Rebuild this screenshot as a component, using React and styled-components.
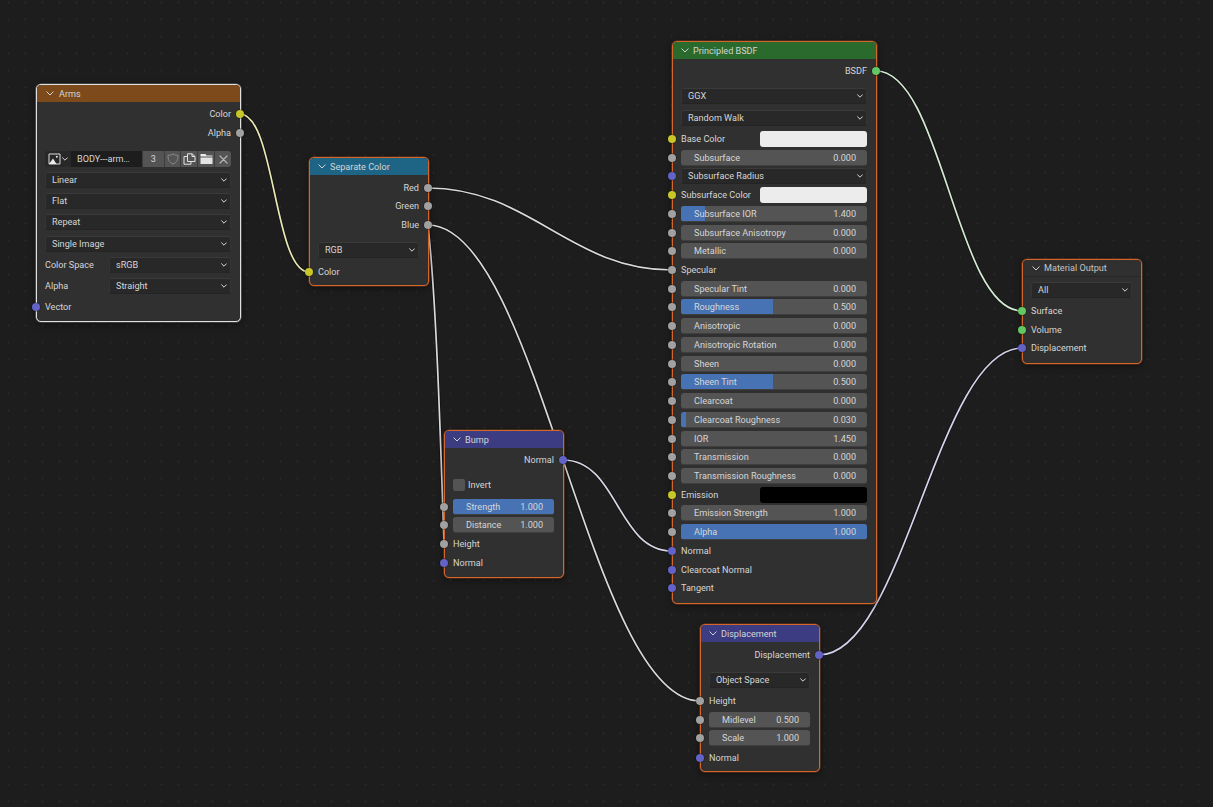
import React from 'react';
import styled, { createGlobalStyle } from 'styled-components';

const Global = createGlobalStyle`
  html, body { margin: 0; padding: 0; background: #1d1d1d; }
  * { box-sizing: border-box; }
`;

const Canvas = styled.div`
  position: relative;
  width: 1213px;
  height: 807px;
  overflow: hidden;
  background-color: #1d1d1d;
  background-image: radial-gradient(circle at 8.5px 2.5px, #282828 0.9px, transparent 1.2px);
  background-size: 17px 17px;
  font-family: Roboto, "Noto Sans", sans-serif;
  font-size: 9.1px;
  color: #d6d6d6;
`;

const Wires = styled.svg`
  position: absolute;
  inset: 0;
  width: 1213px;
  height: 807px;
`;

const NodeBox = styled.section`
  position: absolute;
  left: ${p => p.$x}px;
  top: ${p => p.$y - 1}px;
  width: ${p => p.$w}px;
  height: ${p => p.$h + 1}px;
  background: #303030;
  border: 1px solid ${p => (p.$active ? '#e0e0e0' : '#d4662a')};
  border-radius: 5px;
  box-shadow: 0 0 0 0.6px ${p => (p.$active ? 'rgba(224,224,224,0.4)' : 'rgba(212,102,42,0.45)')}, 0 2px 7px rgba(0, 0, 0, 0.45);
`;

const Header = styled.header`
  height: 17px;
  display: flex;
  align-items: center;
  gap: ${p => p.$gap}px;
  padding-left: ${p => p.$pad}px;
  background: ${p => p.$color};
  border-radius: 4px 4px 0 0;
  color: ${p => (p.$dim ? '#c4c4c4' : '#d4d4d4')};
  border-bottom: ${p => (p.$dim ? '1px solid #262626' : 'none')};
`;

const Row = styled.div`
  position: relative;
  display: flex;
  align-items: center;
  height: 16px;
  margin-top: ${p => p.$mt}px;
  padding: 0 9px 0 8px;
  line-height: 16px;
  white-space: nowrap;
`;

const Socket = styled.span`
  position: absolute;
  top: 4px;
  width: 8px;
  height: 8px;
  border-radius: 50%;
  background: ${p => p.$color};
  box-shadow: 0 0 0 0.5px rgba(0, 0, 0, 0.55);
  ${p => (p.$right ? 'right: -4px;' : 'left: -5px;')}
`;

const OutLabel = styled.span`
  margin-left: auto;
`;

const Label = styled.span`
  flex: 1;
`;

const Field = styled.div`
  flex: ${p => (p.$w ? `0 0 ${p.$w}px` : '1')};
  display: flex;
  align-items: center;
  justify-content: space-between;
  height: 16px;
  border-radius: 3px;
`;

const SelectField = styled(Field)`
  padding: 0 3px 0 6px;
  background: #282828;
  border: 1px solid #353535;
  border-top-color: #3a3a3a;
  border-bottom-color: #242424;
`;

const SliderField = styled(Field)`
  position: relative;
  overflow: hidden;
  padding: 0 11px 0 13px;
  background: #545454;
  border-bottom: 1px solid #3f3f3f;
`;

const Fill = styled.i`
  position: absolute;
  left: 0;
  top: 0;
  bottom: 0;
  background: #4772b3;
`;

const SliderText = styled.span`
  position: relative;
`;

const Swatch = styled.div`
  flex: 0 0 ${p => p.$w}px;
  height: 16px;
  border-radius: 3px;
  background: ${p => p.$color};
`;

const CheckBox = styled.span`
  width: 12px;
  height: 12px;
  margin-right: 3px;
  border-radius: 2px;
  background: #545454;
`;

const ImageBar = styled.div`
  flex: 1;
  display: flex;
  height: 16px;
  gap: 0;
  border-radius: 3px;
  overflow: hidden;
`;

const TypePick = styled.div`
  flex: 0 0 26px;
  display: flex;
  align-items: center;
  justify-content: center;
  gap: 1px;
  background: #282828;
`;

const NameField = styled.div`
  flex: 0 0 71px;
  padding-left: 6px;
  background: #1d1d1d;
  color: #d6d6d6;
`;

const IconBtn = styled.div`
  flex: ${p => p.$grow || 1};
  display: flex;
  align-items: center;
  justify-content: center;
  background: #545454;
  border-left: 1px solid #3c3c3c;
`;

const Chevron = ({ size = 8, color = '#d0d0d0' }) => (
  <svg width={size} height={size * 0.625} viewBox="0 0 8 5" fill="none" stroke={color} strokeWidth="1" strokeLinecap="round" strokeLinejoin="round">
    <path d="M0.8 0.8 L4 4 L7.2 0.8" />
  </svg>
);

const Caret = () => (
  <svg width="6" height="4" viewBox="0 0 6 4" fill="none" stroke="#d8d8d8" strokeWidth="1" strokeLinecap="round" strokeLinejoin="round">
    <path d="M0.6 0.8 L3 3.2 L5.4 0.8" />
  </svg>
);

const ImageIcon = () => (
  <svg width="13" height="12" viewBox="0 0 13 12">
    <path d="M1 1h11v10H1z" fill="none" stroke="#dcdcdc" strokeWidth="1" />
    <path d="M1 11 L5 5.5 L8.5 11z" fill="#ececec" />
    <circle cx="8.8" cy="3.8" r="1" fill="#ececec" />
  </svg>
);

const ShieldIcon = () => (
  <svg width="12" height="12" viewBox="0 0 12 12" fill="none" stroke="#8c8c8c" strokeWidth="1">
    <path d="M6 1 C7.5 2 9 2.3 11 2.3 C11 6.5 10 9.5 6 11 C2 9.5 1 6.5 1 2.3 C3 2.3 4.5 2 6 1z" />
  </svg>
);

const CopyIcon = () => (
  <svg width="13" height="12" viewBox="0 0 13 12" fill="none" stroke="#e2e2e2" strokeWidth="1">
    <path d="M4.5 8.5 V0.8 H9 L12 3.5 V8.5z" />
    <path d="M9 0.8 V3.5 H12" />
    <path d="M4.5 3.5 H1 V11.2 H8 V8.5" />
  </svg>
);

const FolderIcon = () => (
  <svg width="13" height="12" viewBox="0 0 13 12">
    <path d="M0.5 1 H5.5 L6.5 2.5 H12.5 V3.5 H0.5z" fill="#ececec" />
    <path d="M0.5 4.5 H12.5 V11 H0.5z" fill="#e4e4e4" />
  </svg>
);

const CloseIcon = () => (
  <svg width="9" height="9" viewBox="0 0 9 9" fill="none" stroke="#b4b4b4" strokeWidth="1.2" strokeLinecap="round">
    <path d="M1 1 L8 8 M8 1 L1 8" />
  </svg>
);

const Y = '#c7c729';
const G = '#a1a1a1';
const P = '#6363c7';
const N = '#63c763';

const nodes = [
  {
    title: 'Arms', x: 36, y: 85, w: 205, h: 237, color: '#7d4a1c', active: true, pad: 9, gap: 5,
    rows: [
      { k: 'out', y: 114, label: 'Color', s: Y },
      { k: 'out', y: 133, label: 'Alpha', s: G },
      { k: 'image', y: 159 },
      { k: 'select', y: 180, value: 'Linear' },
      { k: 'select', y: 201, value: 'Flat' },
      { k: 'select', y: 222, value: 'Repeat' },
      { k: 'select', y: 244, value: 'Single Image' },
      { k: 'select', y: 265, label: 'Color Space', value: 'sRGB', w: 122 },
      { k: 'select', y: 286, label: 'Alpha', value: 'Straight', w: 122 },
      { k: 'in', y: 307, label: 'Vector', s: P },
    ],
  },
  {
    title: 'Separate Color', x: 309, y: 158, w: 120, h: 128, color: '#1e6484', pad: 8, gap: 4,
    rows: [
      { k: 'out', y: 188, label: 'Red', s: G },
      { k: 'out', y: 206, label: 'Green', s: G },
      { k: 'out', y: 225, label: 'Blue', s: G },
      { k: 'select', y: 250, value: 'RGB' },
      { k: 'in', y: 272, label: 'Color', s: Y },
    ],
  },
  {
    title: 'Principled BSDF', x: 672, y: 42, w: 205, h: 562, color: '#2a6a2c', pad: 8, gap: 4,
    rows: [
      { k: 'out', y: 71, label: 'BSDF', s: N },
      { k: 'select', y: 96, value: 'GGX' },
      { k: 'select', y: 118, value: 'Random Walk' },
      { k: 'color', y: 139, label: 'Base Color', s: Y, c: '#ececec' },
      { k: 'slider', y: 158, label: 'Subsurface', value: '0.000', s: G },
      { k: 'select', y: 176, value: 'Subsurface Radius', s: P },
      { k: 'color', y: 195, label: 'Subsurface Color', s: Y, c: '#ececec' },
      { k: 'slider', y: 214, label: 'Subsurface IOR', value: '1.400', s: G, fill: 24 },
      { k: 'slider', y: 233, label: 'Subsurface Anisotropy', value: '0.000', s: G },
      { k: 'slider', y: 251, label: 'Metallic', value: '0.000', s: G },
      { k: 'in', y: 270, label: 'Specular', s: G },
      { k: 'slider', y: 289, label: 'Specular Tint', value: '0.000', s: G },
      { k: 'slider', y: 307, label: 'Roughness', value: '0.500', s: G, fill: 92 },
      { k: 'slider', y: 326, label: 'Anisotropic', value: '0.000', s: G },
      { k: 'slider', y: 345, label: 'Anisotropic Rotation', value: '0.000', s: G },
      { k: 'slider', y: 364, label: 'Sheen', value: '0.000', s: G },
      { k: 'slider', y: 382, label: 'Sheen Tint', value: '0.500', s: G, fill: 92 },
      { k: 'slider', y: 401, label: 'Clearcoat', value: '0.000', s: G },
      { k: 'slider', y: 420, label: 'Clearcoat Roughness', value: '0.030', s: G, fill: 5 },
      { k: 'slider', y: 439, label: 'IOR', value: '1.450', s: G },
      { k: 'slider', y: 457, label: 'Transmission', value: '0.000', s: G },
      { k: 'slider', y: 476, label: 'Transmission Roughness', value: '0.000', s: G },
      { k: 'color', y: 495, label: 'Emission', s: Y, c: '#000000' },
      { k: 'slider', y: 513, label: 'Emission Strength', value: '1.000', s: G },
      { k: 'slider', y: 532, label: 'Alpha', value: '1.000', s: G, fill: 186 },
      { k: 'in', y: 551, label: 'Normal', s: P },
      { k: 'in', y: 570, label: 'Clearcoat Normal', s: P },
      { k: 'in', y: 588, label: 'Tangent', s: P },
    ],
  },
  {
    title: 'Bump', x: 444, y: 431, w: 120, h: 147, color: '#3c3c83', pad: 8, gap: 4,
    rows: [
      { k: 'out', y: 460, label: 'Normal', s: P },
      { k: 'check', y: 485, label: 'Invert' },
      { k: 'slider', y: 507, label: 'Strength', value: '1.000', s: G, fill: 102 },
      { k: 'slider', y: 525, label: 'Distance', value: '1.000', s: G },
      { k: 'in', y: 544, label: 'Height', s: G },
      { k: 'in', y: 563, label: 'Normal', s: P },
    ],
  },
  {
    title: 'Displacement', x: 700, y: 625, w: 120, h: 147, color: '#3c3c83', pad: 8, gap: 4,
    rows: [
      { k: 'out', y: 655, label: 'Displacement', s: P },
      { k: 'select', y: 680, value: 'Object Space' },
      { k: 'in', y: 701, label: 'Height', s: G },
      { k: 'slider', y: 720, label: 'Midlevel', value: '0.500', s: G },
      { k: 'slider', y: 738, label: 'Scale', value: '1.000', s: G },
      { k: 'in', y: 758, label: 'Normal', s: P },
    ],
  },
  {
    title: 'Material Output', x: 1022, y: 260, w: 120, h: 104, color: '#303030', dim: true, pad: 9, gap: 4,
    rows: [
      { k: 'select', y: 290, value: 'All' },
      { k: 'in', y: 311, label: 'Surface', s: N },
      { k: 'in', y: 330, label: 'Volume', s: N },
      { k: 'in', y: 348, label: 'Displacement', s: P },
    ],
  },
];

const wires = [
  { d: 'M240 114 C275 114 274 272 309 272', c: '#e8e8b4' },
  { d: 'M428 188 C530 188 570 270 672 270', c: '#d8d8d8' },
  { d: 'M428 225 C538 225 590 701 700 701', c: '#d8d8d8' },
  { d: 'M428 225 C436 300 440 420 444 544', c: '#dadada' },
  { d: 'M563 460 C618 460 617 551 672 551', c: '#d6d6e2' },
  { d: 'M876 71 C942 71 956 311 1022 311', c: '#d2e8d2' },
  { d: 'M819 655 C904 655 937 348 1022 348', c: '#d2d2ea' },
];

const RowContent = ({ r }) => {
  switch (r.k) {
    case 'out':
      return <OutLabel>{r.label}</OutLabel>;
    case 'in':
      return <Label>{r.label}</Label>;
    case 'select':
      return (
        <>
          {r.label && <Label>{r.label}</Label>}
          <SelectField $w={r.w}>
            <span>{r.value}</span>
            <Caret />
          </SelectField>
        </>
      );
    case 'slider':
      return (
        <SliderField>
          {r.fill ? <Fill style={{ width: r.fill }} /> : null}
          <SliderText>{r.label}</SliderText>
          <SliderText>{r.value}</SliderText>
        </SliderField>
      );
    case 'color':
      return (
        <>
          <Label>{r.label}</Label>
          <Swatch $w={107} $color={r.c} />
        </>
      );
    case 'check':
      return (
        <>
          <CheckBox />
          <Label>{r.label}</Label>
        </>
      );
    case 'image':
      return (
        <ImageBar>
          <TypePick>
            <ImageIcon />
            <Caret />
          </TypePick>
          <NameField>BODY---arm…</NameField>
          <IconBtn $grow={1.3}>3</IconBtn>
          <IconBtn><ShieldIcon /></IconBtn>
          <IconBtn><CopyIcon /></IconBtn>
          <IconBtn><FolderIcon /></IconBtn>
          <IconBtn><CloseIcon /></IconBtn>
        </ImageBar>
      );
    default:
      return null;
  }
};

const Node = ({ n }) => {
  let prev = n.y + 17;
  return (
    <NodeBox $x={n.x} $y={n.y} $w={n.w} $h={n.h} $active={n.active}>
      <Header $color={n.color} $dim={n.dim} $pad={n.pad} $gap={n.gap}>
        <Chevron />
        <span>{n.title}</span>
      </Header>
      {n.rows.map((r, i) => {
        const mt = r.y - 8 - prev;
        prev = r.y + 8;
        return (
          <Row key={i} $mt={mt}>
            {r.s && <Socket $color={r.s} $right={r.k === 'out'} />}
            <RowContent r={r} />
          </Row>
        );
      })}
    </NodeBox>
  );
};

export default function App() {
  return (
    <Canvas>
      <Global />
      <Wires viewBox="0 0 1213 807" fill="none">
        {wires.map((w, i) => (
          <g key={i}>
            <path d={w.d} stroke="rgba(0,0,0,0.45)" strokeWidth="3.2" />
            <path d={w.d} stroke={w.c} strokeWidth="1.7" />
          </g>
        ))}
      </Wires>
      {nodes.map(n => <Node key={n.title} n={n} />)}
    </Canvas>
  );
}
